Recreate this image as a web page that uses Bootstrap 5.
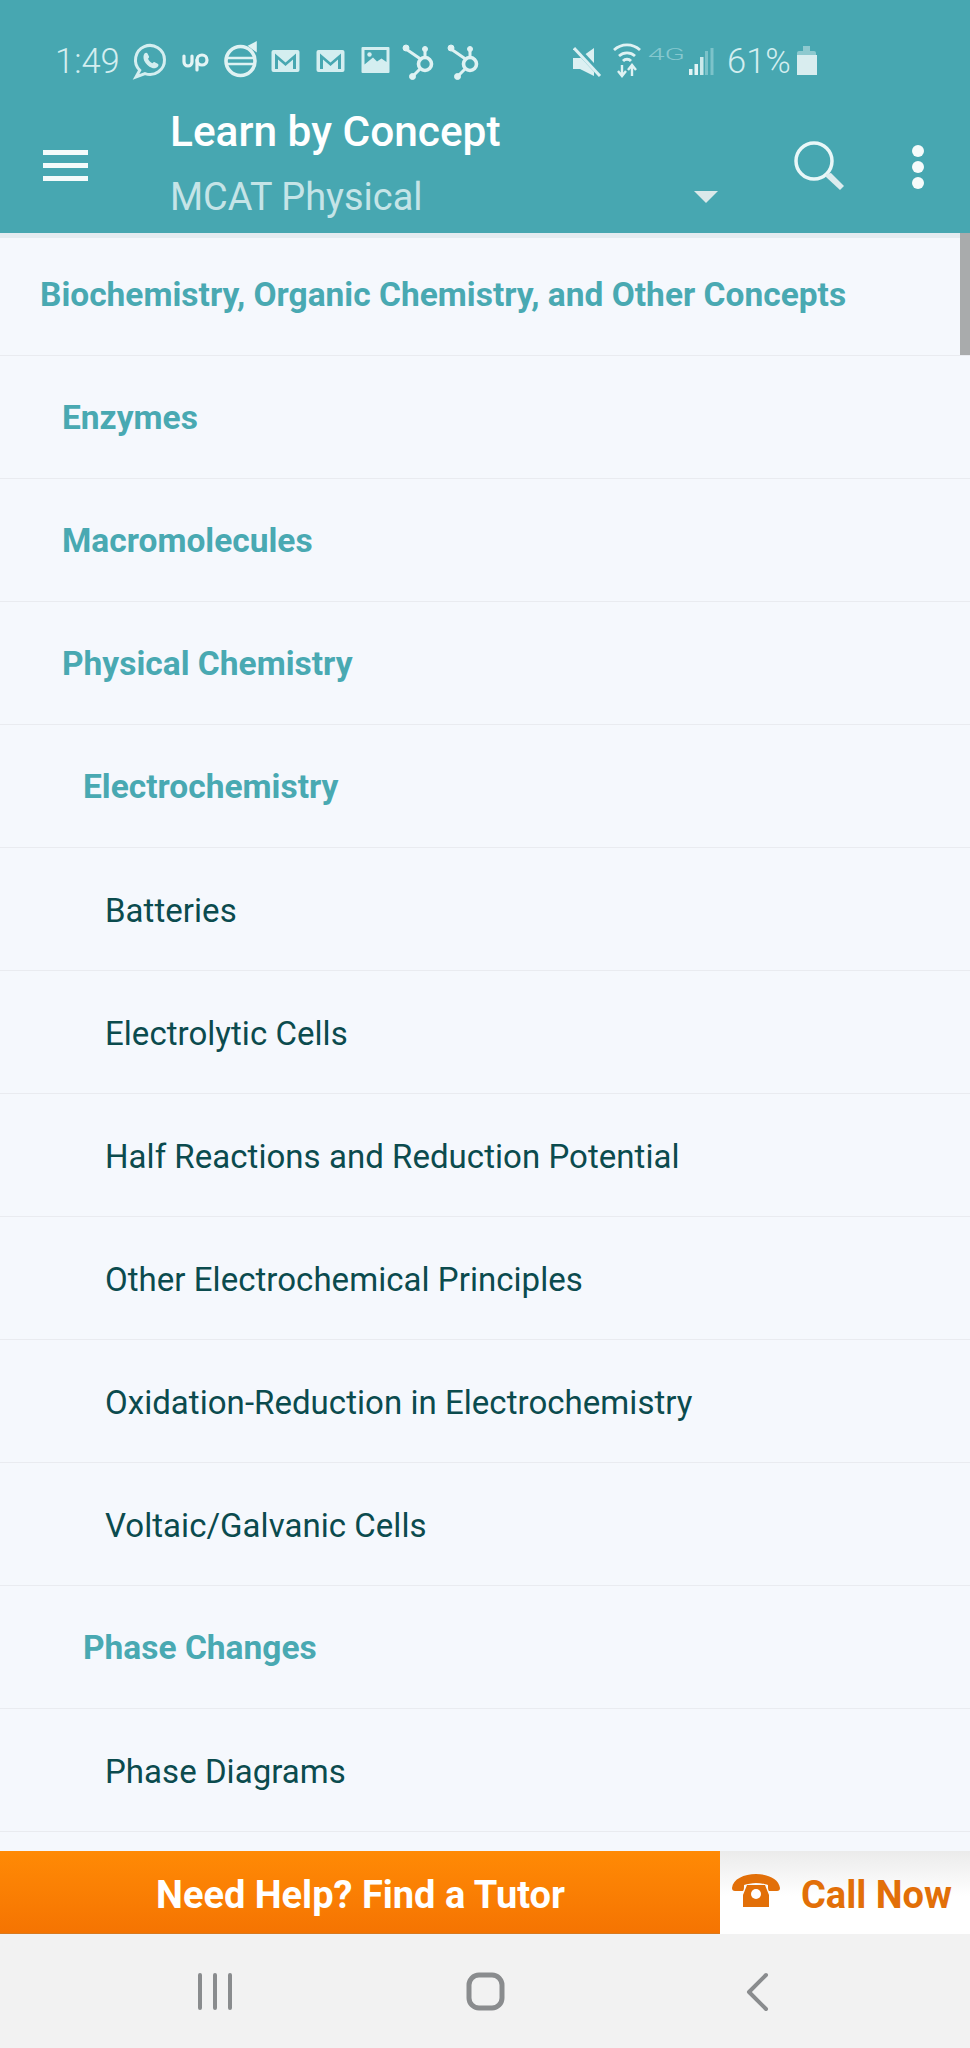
<!DOCTYPE html>
<html lang="en">
<head>
<meta charset="utf-8">
<title>Learn by Concept</title>
<link href="https://cdn.jsdelivr.net/npm/bootstrap@5.3.0/dist/css/bootstrap.min.css" rel="stylesheet">
<style>
html,body{margin:0;height:2048px;overflow:hidden;background:#f5f8fd;}
body,button{font-family:Roboto,"Liberation Sans",sans-serif;}
.phone-screen{width:970px;height:2048px;position:relative;overflow:hidden;}
.app-head{background:#47a7b1;height:233px;flex:none;}
.stat-row{height:90px;padding:38px 0 0 55px;color:#d4eef0;}
.stat-time{font-size:34.5px;width:73px;height:46px;line-height:46px;font-weight:300;}
.stat-row svg{flex:none;display:block;}
.stat-pct{font-size:34.5px;line-height:46px;width:69px;margin:0 0 0 13px;font-weight:300;}
.stat-right{margin-left:85px;}
.bar-row{height:143px;}
.menu-btn{width:170px;padding:60px 0 0 43px;}
.burger-line{display:block;width:45px;height:5px;background:#f4fbfb;margin-bottom:8px;}
.title-col{width:548px;}
.head-title{font-size:42.4px;font-weight:500;line-height:46px;color:#fff;margin:19px 0 0;}
.head-sub{font-size:37.9px;line-height:44px;color:#c5e4e7;margin-top:20px;}
.sub-caret{width:0;height:0;border-left:12px solid transparent;border-right:12px solid transparent;border-top:12px solid #dbe9ea;}
.head-search{margin:50px 0 0 75px;}
.head-dots{margin:55px 0 0 65px;}
.head-dot{display:block;width:12px;height:12px;border-radius:50%;background:#f6fbfb;margin-bottom:4px;}
.concept-list{flex:1 1 auto;overflow:hidden;min-height:0;}
.concept-list .list-group-item{flex:none;height:123px;background:#f5f8fd;border-color:#e9ebf0;border-width:0 0 1.5px;display:flex;align-items:center;font-size:33px;color:#0b4b4e;padding:3px 0 0 105px;border-radius:0;letter-spacing:.04px;}
.concept-list .concept-head{font-weight:700;color:#49a9b2;font-size:33.5px;letter-spacing:0;padding-top:2px;}
.concept-list .lvl-0{padding-left:40px;}
.concept-list .lvl-1{padding-left:62px;}
.concept-list .lvl-2{padding-left:83px;}
.concept-list .first-row{padding-top:0;padding-bottom:2px;border-top:5px solid #e4ecf1;}
.list-thumb{position:absolute;right:0;top:233px;width:10px;height:122px;background:#a9abac;}
.cta-row{height:83px;flex:none;}
.cta-tutor{width:720px;background:linear-gradient(#ff8a05,#f57402);color:#fff;font-size:38px;font-weight:700;padding:6px 0 0 1px;border-bottom:1px solid #d97a20;}
.cta-call{width:250px;background:linear-gradient(#ebebeb,#ffffff 55%);color:#e26f08;font-size:38px;font-weight:700;padding:0 0 0 11px;}
.cta-call svg{margin-right:20px;margin-top:-4px;}
.cta-call span{padding-top:6px;}
.sys-nav{height:114px;flex:none;background:#f2f2f2;}
.sys-nav svg{display:block;}
.net-label{font:300 17px Roboto,sans-serif;fill:#86c8cf;}
</style>
</head>
<body>
<div class="phone-screen d-flex flex-column">
  <header class="app-head d-flex flex-column">
    <div class="stat-row d-flex align-items-start">
      <div class="stat-time">1:49</div>
      <svg width="45" height="46" viewBox="0 0 45 46" fill="none" stroke="#d4eef0" stroke-width="3"><path d="M8 39L11.750 32.250A14.500 14.500 0 1 1 17 35.600Z"/><path d="M16.500 15.500c1-1 2.500-1 3 0l1.500 3c.3.700 0 1.200-1 2.200 1 2 2.500 3.500 4.500 4.500 1-1 1.500-1.300 2.200-1l3 1.500c1 .5 1 2 0 3-1.500 1.500-3.500 2-6 1-3-1-6-4-7.500-7-1-2.700-1-5.500.3-7.200z" fill="#d4eef0" stroke="none"/></svg>
      <svg width="45" height="46" viewBox="0 0 45 46" fill="none" stroke="#e4f4f5" stroke-width="3.200" stroke-linecap="round"><path d="M11 18v6a4 4 0 0 0 8 0v-6"/><circle cx="29" cy="22" r="5"/><path d="M24 22v10"/></svg>
      <svg width="45" height="46" viewBox="0 0 45 46" fill="none" stroke="#dff2f3" stroke-width="3.600"><circle cx="22.500" cy="23" r="14.500"/><path d="M8 20h29M8 26h29" stroke-width="2.600"/><path d="M33 8l4-2 0 5z" fill="#dff2f3"/></svg>
      <svg width="45" height="46" viewBox="0 0 45 46"><rect x="8.500" y="12" width="28" height="22" rx="2" fill="#d4eef0"/><path d="M12 31V15.500l10.500 9 10.500-9V31h-3V21.500l-7.500 6.500-7.500-6.500V31z" fill="#47a7b1"/></svg>
      <svg width="45" height="46" viewBox="0 0 45 46"><rect x="8.500" y="12" width="28" height="22" rx="2" fill="#d4eef0"/><path d="M12 31V15.500l10.500 9 10.500-9V31h-3V21.500l-7.500 6.500-7.500-6.500V31z" fill="#47a7b1"/></svg>
      <svg width="45" height="46" viewBox="0 0 45 46"><rect x="8.500" y="9" width="28" height="26" rx="1" fill="#d4eef0"/><path d="M11.500 12h22v12l-5-3.500-4.500 3-4-4-8.500 7z" fill="#47a7b1"/><circle cx="16.500" cy="16.500" r="2.200" fill="#d4eef0"/></svg>
      <svg width="45" height="46" viewBox="0 0 45 46" fill="none" stroke="#dff2f3"><circle cx="27" cy="26" r="6.500" stroke-width="3.600"/><path d="M8 11l14.500 10M27 19v-7M22 31l-7 7" stroke-width="3"/><circle cx="8" cy="10" r="3" fill="#dff2f3"/><circle cx="27" cy="11" r="2.500" fill="#dff2f3"/><circle cx="14.500" cy="38.500" r="3" fill="#dff2f3"/></svg>
      <svg width="45" height="46" viewBox="0 0 45 46" fill="none" stroke="#dff2f3"><circle cx="27" cy="26" r="6.500" stroke-width="3.600"/><path d="M8 11l14.500 10M27 19v-7M22 31l-7 7" stroke-width="3"/><circle cx="8" cy="10" r="3" fill="#dff2f3"/><circle cx="27" cy="11" r="2.500" fill="#dff2f3"/><circle cx="14.500" cy="38.500" r="3" fill="#dff2f3"/></svg>
      <div class="stat-right d-flex">
        <svg width="40" height="46" viewBox="0 0 40 46"><path d="M0 20h7l14-10v28l-14-7H0z" fill="#dcf0f2"/><path d="M2 9l26 28" stroke="#47a7b1" stroke-width="6"/><path d="M1 10l26 28" stroke="#dcf0f2" stroke-width="3"/></svg>
        <svg width="35" height="46" viewBox="0 0 35 46" fill="none" stroke="#dff2f3" stroke-width="2.800"><path d="M1 12a19 19 0 0 1 26 0M6 18a12 12 0 0 1 16 0M10 23a5.500 5.500 0 0 1 8 0"/><path d="M9 27v11M5 33l4 5 4-5M19 38V27M15 32l4-5 4 5" stroke-width="2.400"/></svg>
        <svg width="41" height="46" viewBox="0 0 41 46"><text class="net-label" x="0" y="22" textLength="37" lengthAdjust="spacingAndGlyphs">4G</text></svg>
        <svg width="25" height="46" viewBox="0 0 25 46"><rect x="0" y="31" width="3.500" height="6" fill="#e4f4f5"/><rect x="5.500" y="26" width="3.500" height="11" fill="#e4f4f5"/><rect x="11" y="19" width="3.500" height="18" fill="#cbe9eb"/><rect x="16" y="13" width="3" height="24" fill="#7cc3ca"/><rect x="21.500" y="10" width="3" height="27" fill="#7cc3ca"/></svg>
        <div class="stat-pct">61%</div>
        <svg width="22" height="46" viewBox="0 0 22 46"><path d="M1 17V15a2 2 0 0 1 2-2h4V8h7v5h4a2 2 0 0 1 2 2v2z" fill="#8ec9cf"/><rect x="1" y="17" width="20" height="20" fill="#d9edef"/></svg>
      </div>
    </div>
    <div class="bar-row d-flex">
      <button class="menu-btn btn border-0 rounded-0 align-self-start text-start" type="button" aria-label="Menu">
        <span class="burger-line"></span><span class="burger-line"></span><span class="burger-line"></span>
      </button>
      <div class="title-col">
        <h1 class="head-title">Learn by Concept</h1>
        <div class="head-sub d-flex justify-content-between align-items-center"><span>MCAT Physical</span><span class="sub-caret"></span></div>
      </div>
      <svg class="head-search" width="54" height="53" viewBox="0 0 54 53" fill="none"><circle cx="21" cy="21" r="18" stroke="#e9f7f8" stroke-width="3.500"/><path d="M33 34l5-1 13 13-4 4-14-13z" fill="#dcecee"/></svg>
      <div class="head-dots"><span class="head-dot"></span><span class="head-dot"></span><span class="head-dot"></span></div>
    </div>
  </header>
  <div class="concept-list list-group list-group-flush">
    <div class="list-group-item first-row concept-head lvl-0">Biochemistry, Organic Chemistry, and Other Concepts</div>
    <div class="list-group-item concept-head lvl-1">Enzymes</div>
    <div class="list-group-item concept-head lvl-1">Macromolecules</div>
    <div class="list-group-item concept-head lvl-1">Physical Chemistry</div>
    <div class="list-group-item concept-head lvl-2">Electrochemistry</div>
    <div class="list-group-item">Batteries</div>
    <div class="list-group-item">Electrolytic Cells</div>
    <div class="list-group-item">Half Reactions and Reduction Potential</div>
    <div class="list-group-item">Other Electrochemical Principles</div>
    <div class="list-group-item">Oxidation-Reduction in Electrochemistry</div>
    <div class="list-group-item">Voltaic/Galvanic Cells</div>
    <div class="list-group-item concept-head lvl-2">Phase Changes</div>
    <div class="list-group-item">Phase Diagrams</div>
    <div class="list-group-item"></div>
  </div>
  <div class="list-thumb"></div>
  <div class="cta-row d-flex">
    <div class="cta-tutor d-flex align-items-center justify-content-center">Need Help? Find a Tutor</div>
    <div class="cta-call d-flex align-items-center">
      <svg width="50" height="33" viewBox="0 0 50 33" fill="#e26f08"><path d="M1 14C2 5 13 0 25 0s23 5 24 14c0 2-1 3-3 3h-7c-2 0-2-2-2-6-3-1-8-2-12-2s-9 1-12 2c0 4 0 6-2 6H4c-2 0-3-1-3-3z"/><path d="M16 11h18l4 10v12H12V21z"/><circle cx="25" cy="20" r="5" fill="#fff"/></svg>
      <span>Call Now</span>
    </div>
  </div>
  <nav class="sys-nav d-flex">
    <svg width="970" height="114" viewBox="0 0 970 114" fill="none" stroke="#8a8c8e" stroke-linecap="round"><path d="M200 41v33M215 41v33M230 41v33" stroke-width="4"/><rect x="469" y="41" width="33" height="33" rx="10" stroke-width="5"/><path d="M766 41l-17 17 17 17" stroke-width="4" stroke-linejoin="round"/></svg>
  </nav>
</div>
<script src="https://cdn.jsdelivr.net/npm/bootstrap@5.3.0/dist/js/bootstrap.bundle.min.js"></script>
</body>
</html>
